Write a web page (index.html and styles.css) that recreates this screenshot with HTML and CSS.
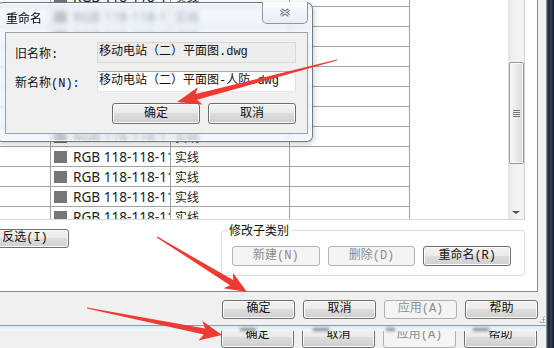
FILE: index.html
```html
<!DOCTYPE html>
<html lang="zh-CN">
<head>
    <meta charset="UTF-8">
    <title>对象样式 - 重命名</title>
    <link rel="stylesheet" href="styles.css">
</head>
<body>
    <div class="screen">
        <div class="dialog">
            <div class="tabpage">
                <div class="gridbox">
                    <div class="grid">
                        <div class="rows">
                            <div class="row"><div class="cell c1"></div><div class="cell c2"><i class="swatch"></i><span class="rgb">RGB 118-118-118</span></div><div class="cell c3">实线</div><div class="cell c4"></div></div>
                            <div class="row"><div class="cell c1"></div><div class="cell c2"><i class="swatch"></i><span class="rgb">RGB 118-118-118</span></div><div class="cell c3">实线</div><div class="cell c4"></div></div>
                            <div class="row"><div class="cell c1"></div><div class="cell c2"><i class="swatch"></i><span class="rgb">RGB 118-118-118</span></div><div class="cell c3">实线</div><div class="cell c4"></div></div>
                            <div class="row"><div class="cell c1"></div><div class="cell c2"><i class="swatch"></i><span class="rgb">RGB 118-118-118</span></div><div class="cell c3">实线</div><div class="cell c4"></div></div>
                            <div class="row"><div class="cell c1"></div><div class="cell c2"><i class="swatch"></i><span class="rgb">RGB 118-118-118</span></div><div class="cell c3">实线</div><div class="cell c4"></div></div>
                            <div class="row"><div class="cell c1"></div><div class="cell c2"><i class="swatch"></i><span class="rgb">RGB 118-118-118</span></div><div class="cell c3">实线</div><div class="cell c4"></div></div>
                            <div class="row"><div class="cell c1"></div><div class="cell c2"><i class="swatch"></i><span class="rgb">RGB 118-118-118</span></div><div class="cell c3">实线</div><div class="cell c4"></div></div>
                            <div class="row"><div class="cell c1"></div><div class="cell c2"><i class="swatch"></i><span class="rgb">RGB 118-118-118</span></div><div class="cell c3">实线</div><div class="cell c4"></div></div>
                            <div class="row"><div class="cell c1"></div><div class="cell c2"><i class="swatch"></i><span class="rgb">RGB 118-118-118</span></div><div class="cell c3">实线</div><div class="cell c4"></div></div>
                            <div class="row"><div class="cell c1"></div><div class="cell c2"><i class="swatch"></i><span class="rgb">RGB 118-118-118</span></div><div class="cell c3">实线</div><div class="cell c4"></div></div>
                            <div class="row"><div class="cell c1"></div><div class="cell c2"><i class="swatch"></i><span class="rgb">RGB 118-118-118</span></div><div class="cell c3">实线</div><div class="cell c4"></div></div>
                            <div class="row"><div class="cell c1"></div><div class="cell c2"><i class="swatch"></i><span class="rgb">RGB 118-118-118</span></div><div class="cell c3">实线</div><div class="cell c4"></div></div>
                        </div>
                    </div>
                    <div class="vscroll">
                        <div class="thumb"><span class="grip"></span></div>
                        <span class="down"></span>
                    </div>
                </div>
                <div class="lower">
                    <button class="btn invert">反选(I)</button>
                    <fieldset class="group">
                        <legend>修改子类别</legend>
                        <button class="btn" disabled>新建(N)</button>
                        <button class="btn" disabled>删除(D)</button>
                        <button class="btn">重命名(R)</button>
                    </fieldset>
                </div>
            </div>
            <div class="actions">
                <button class="btn">确定</button>
                <button class="btn">取消</button>
                <button class="btn" disabled>应用(A)</button>
                <button class="btn">帮助</button>
                <span class="sizer"></span>
            </div>
            <div class="glass-edge">
                <span class="smudge"></span>
                <span class="smudge"></span>
                <span class="smudge short"></span>
                <span class="smudge"></span>
            </div>
            <div class="behind">
                <button class="btn">确定</button>
                <button class="btn">取消</button>
                <button class="btn" disabled>应用(A)</button>
                <button class="btn">帮助</button>
            </div>
        </div>
        <div class="edge"></div>

        <div class="rename">
            <div class="rn-title">
                <span>重命名</span>
                <button class="rn-close">
                    <svg width="12" height="9" viewBox="0 0 12 9">
                        <path d="M2 1.5 L10 7.5 M10 1.5 L2 7.5" stroke="#626b75" stroke-width="3.4" fill="none"/>
                        <path d="M2 1.5 L10 7.5 M10 1.5 L2 7.5" stroke="#eef1f4" stroke-width="1.3" fill="none"/>
                    </svg>
                </button>
            </div>
            <div class="rn-body">
                <div class="rn-row">
                    <label>旧名称:</label>
                    <div class="field ro">移动电站（二）平面图.dwg</div>
                </div>
                <div class="rn-row">
                    <label>新名称(N):</label>
                    <div class="field">移动电站（二）平面图-人防.dwg</div>
                </div>
                <div class="rn-btns">
                    <button class="btn">确定</button>
                    <button class="btn">取消</button>
                </div>
            </div>
        </div>

        <svg class="arrows" width="554" height="348" viewBox="0 0 554 348">
            <polygon points="177,102 202.5,104.6 197.1,99.8 337.1,60.5 336.9,59.5 195.5,94 197.9,87.2"/>
            <polygon points="247,292 232.9,272.8 233.2,280 157.3,236.6 156.7,237.4 230,285.2 223.5,288.2"/>
            <polygon points="222,335 202.4,320.9 205,328.6 87.1,307.5 86.9,308.5 203.8,334.4 198.4,340.5"/>
        </svg>
    </div>
</body>
</html>
```

FILE: styles.css
```css
* {
    box-sizing: border-box;
}
body {
    margin: 0;
    background: #16202b;
    font-family: "Noto Sans CJK SC", sans-serif;
    font-size: 12px;
    color: #1b1b1b;
}
.screen {
    position: relative;
    display: flex;
    width: 554px;
    height: 348px;
    overflow: hidden;
}
.dialog {
    flex: none;
    width: 546px;
    height: 348px;
    background: #f0f0f0;
    display: flex;
    flex-direction: column;
}
.edge {
    flex: 1;
    background: linear-gradient(90deg, #c9d0d6 0, #46525e 1px, #1b2530 3px, #34465a 5px, #0f161e 8px);
}

/* tab page with the style grid */
.tabpage {
    flex: none;
    width: 538px;
    height: 292px;
    background: #fff;
    border-right: 1px solid #898c95;
    border-bottom: 1px solid #898c95;
    display: flex;
    flex-direction: column;
}
.gridbox {
    flex: none;
    display: flex;
    width: 525px;
    height: 220px;
    border-right: 1px solid #d2d2d2;
    border-bottom: 1px solid #d8d8d8;
}
.grid {
    width: 508px;
    overflow: hidden;
}
.rows {
    margin-top: -13px;
}
.row {
    display: flex;
    height: 20px;
}
.cell {
    height: 20px;
    border-right: 1px solid #a2a2a2;
    border-bottom: 1px solid #a2a2a2;
    display: flex;
    align-items: center;
    overflow: hidden;
    white-space: nowrap;
}
.c1 { width: 51px; }
.c2 { width: 120px; padding-left: 3px; }
.c3 { width: 119px; padding-left: 4px; }
.c4 { width: 120px; }
.swatch {
    flex: none;
    width: 13px;
    height: 12px;
    margin-right: 6px;
    background: #767676;
}
.rgb {
    font-family: "Noto Sans", sans-serif;
    font-size: 13.6px;
    color: #222;
}
.vscroll {
    width: 16px;
    background: linear-gradient(90deg, #e4e4e4, #f1f1f1 35%, #f4f4f4);
    display: flex;
    flex-direction: column;
    align-items: flex-end;
}
.thumb {
    margin-top: 62px;
    width: 15px;
    height: 102px;
    border: 1px solid #979797;
    border-radius: 2px;
    background: linear-gradient(90deg, #f6f6f6, #ececec 45%, #d8d8d8);
    box-shadow: inset 0 0 0 1px #fbfbfb;
    display: flex;
    align-items: center;
    justify-content: center;
}
.grip {
    width: 7px;
    height: 7px;
    background: repeating-linear-gradient(#767676 0 1px, #e9e9e9 1px 2px);
}
.down {
    margin: auto 4px 5px 0;
    border: 4px solid transparent;
    border-top: 3px solid #4d4d4d;
    border-bottom: 0;
}
.lower {
    flex: 1;
    display: flex;
    align-items: flex-start;
}

/* buttons */
.btn {
    width: 88px;
    height: 20px;
    padding: 0;
    border: 1px solid #707070;
    border-radius: 3px;
    background: linear-gradient(#f2f2f2 0, #ebebeb 49%, #dddddd 50%, #cfcfcf 100%);
    box-shadow: inset 0 0 0 1px #fbfbfb;
    font-family: "Liberation Mono", "Noto Sans CJK SC", monospace;
    font-size: 12px;
    line-height: 17px;
    color: #111;
}
.btn:disabled {
    border-color: #adb2b5;
    background: #f4f4f4;
    box-shadow: none;
    color: #8c8c8c;
}
.invert {
    margin: 9px 0 0 -19px;
    height: 19px;
}
.group {
    margin: 2px 12px 0 auto;
    min-width: 0;
    width: 304px;
    height: 54px;
    padding: 8px 13px 0 10px;
    border: 1px solid #d5dfe5;
    border-radius: 3px;
    display: flex;
    gap: 8px;
}
.group legend {
    margin-left: -5px;
    padding: 0 2px;
    line-height: 16px;
    font-size: 12px;
    color: #111;
}
.actions {
    flex: none;
    height: 33px;
    display: flex;
    justify-content: flex-end;
    align-items: flex-start;
    padding-top: 8px;
}
.actions .btn,
.behind .btn {
    width: 73px;
    height: 19px;
    margin-left: 8px;
}
.sizer {
    align-self: flex-end;
    width: 6px;
    height: 8px;
    margin: 0 1px 2px 1px;
    background: radial-gradient(circle, #9a9a9a 0.9px, transparent 1.2px) 0 0 / 3px 3px;
    clip-path: polygon(100% 0, 100% 100%, 0 100%);
}
.glass-edge {
    flex: none;
    height: 6px;
    border-top: 1px solid #8e9aa4;
    background: linear-gradient(#d9ebf0, #eefbfc);
    display: flex;
    padding-left: 240px;
}
.smudge {
    width: 26px;
    height: 3px;
    margin: 2px 57px 0 0;
    background: rgba(40, 52, 72, 0.55);
    filter: blur(1.4px);
}
.smudge.short {
    width: 14px;
    margin-right: 78px;
}
.behind {
    flex: 1;
    display: flex;
    overflow: hidden;
    padding-left: 213px;
}
.behind .btn {
    height: 22px;
    margin-top: -5px;
    padding-bottom: 6px;
}

/* rename dialog on top */
.rename {
    position: absolute;
    left: -4px;
    top: 2px;
    width: 317px;
    height: 140px;
    padding: 0 4px 7px 8px;
    border: 1px solid rgba(70, 80, 92, 0.75);
    border-radius: 7px 7px 6px 6px;
    background: rgba(232, 242, 250, 0.62);
    backdrop-filter: blur(2.5px);
    box-shadow: inset 0 0 0 1px rgba(255, 255, 255, 0.7), 1px 2px 6px rgba(0, 0, 0, 0.2);
    display: flex;
    flex-direction: column;
}
.rn-title {
    flex: none;
    height: 29px;
    display: flex;
    align-items: center;
    justify-content: space-between;
    padding-left: 1px;
    color: #000;
}
.rn-close {
    align-self: flex-start;
    margin-top: -1px;
    width: 46px;
    height: 22px;
    padding: 0;
    border: 1px solid #8d97a3;
    border-top: 0;
    border-radius: 0 0 5px 5px;
    background: linear-gradient(#fdfeff, #e6edf4);
    display: flex;
    align-items: center;
    justify-content: center;
}
.rn-body {
    flex: 1;
    background: #f0f0f0;
    border: 1px solid #9ba3ad;
    padding: 9px 11px 0 9px;
    display: flex;
    flex-direction: column;
    gap: 8px;
    font-family: "Liberation Mono", "Noto Sans CJK SC", monospace;
}
.rn-row {
    display: flex;
    align-items: center;
}
.rn-row label {
    flex: 1;
    color: #111;
}
.field {
    width: 199px;
    height: 21px;
    padding-left: 1px;
    border: 1px solid;
    border-color: #abadb3 #dbdfe6 #e3e9ef #e2e3ea;
    background: #fff;
    line-height: 19px;
    white-space: nowrap;
    overflow: hidden;
    color: #111;
}
.field.ro {
    background: #ededed;
    border-color: #d9d9d9;
}
.rn-btns {
    display: flex;
    justify-content: flex-end;
    gap: 8px;
    margin-top: 3px;
}
.rn-btns .btn {
    height: 21px;
    line-height: 18px;
}

.arrows {
    position: absolute;
    left: 0;
    top: 0;
    fill: #ef3a33;
    pointer-events: none;
}
```
